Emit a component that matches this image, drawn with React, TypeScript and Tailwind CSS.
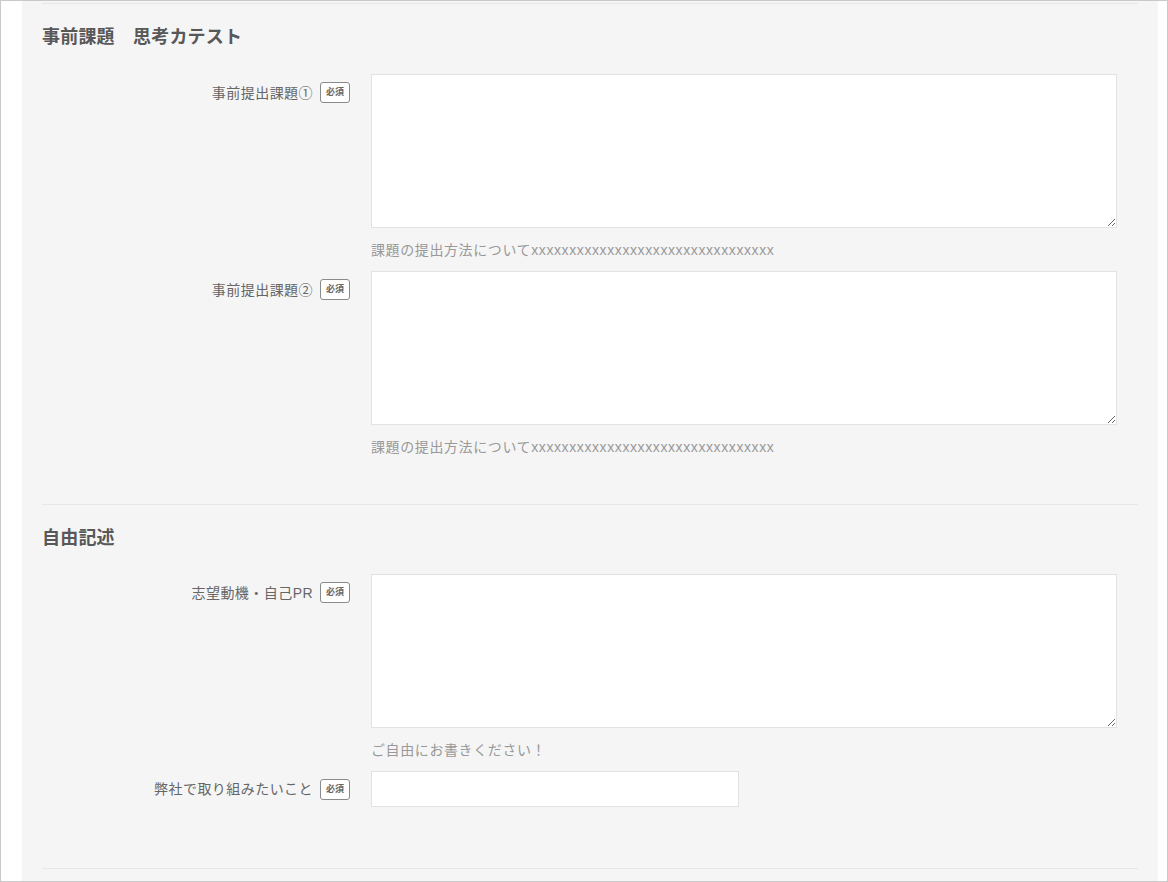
import React from "react";

const FONT = { fontFamily: '"Liberation Sans", "Noto Sans CJK JP", sans-serif' };

function Badge() {
  return (
    <span className="inline-flex h-[21px] w-[30px] items-center justify-center rounded-[3px] border border-[#8a8a8a] bg-white text-[9px] font-bold leading-none text-[#666]">
      必須
    </span>
  );
}

function Label({ text }: { text: string }) {
  return (
    <div className="flex w-[308px] shrink-0 items-center justify-end gap-[7px]">
      <span className="text-[14px] leading-[20px] tracking-[0.45px] text-[#666]">{text}</span>
      <Badge />
    </div>
  );
}

function TextareaRow({ label, help, first }: { label: string; help: string; first?: boolean }) {
  return (
    <div className={`flex ${first ? "" : "mt-[11px]"}`}>
      <div className="pt-[8px]">
        <Label text={label} />
      </div>
      <div className="ml-[21px] flex w-[746px] flex-col">
        <textarea className="block h-[154px] w-[746px] border border-[#e2e2e2] bg-white outline-none" />
        <p className="mt-[12px] text-[14px] leading-[20px] tracking-[0.6px] text-[#999]">{help}</p>
      </div>
    </div>
  );
}

export default function App() {
  const xs = "x".repeat(32);
  return (
    <div style={FONT} className="box-border h-[882px] w-[1168px] overflow-hidden border border-[#c9c9c9] bg-white">
      <div className="ml-[21px] mr-[9px] h-[880px] w-[1136px] bg-[#f5f5f5] px-[20px]">
        <div className="h-[2px]" />
        <section className="border-t border-[#e6e6e6] pb-[47px] pt-[20px]">
          <h2 className="text-[18px] font-bold leading-[26px] tracking-[0.2px] text-[#585858]">事前課題　思考カテスト</h2>
          <div className="mt-[24px]">
            <TextareaRow first label="事前提出課題①" help={`課題の提出方法について${xs}`} />
            <TextareaRow label="事前提出課題②" help={`課題の提出方法について${xs}`} />
          </div>
        </section>
        <section className="border-t border-[#e6e6e6] pb-[61px] pt-[20px]">
          <h2 className="text-[18px] font-bold leading-[26px] tracking-[0.2px] text-[#585858]">自由記述</h2>
          <div className="mt-[23px]">
            <TextareaRow first label="志望動機・自己PR" help="ご自由にお書きください！" />
            <div className="mt-[11px] flex items-center">
              <Label text="弊社で取り組みたいこと" />
              <input className="ml-[21px] block h-[36px] w-[368px] border border-[#e2e2e2] bg-white outline-none" />
            </div>
          </div>
        </section>
        <div className="border-t border-[#e6e6e6]" />
      </div>
    </div>
  );
}
